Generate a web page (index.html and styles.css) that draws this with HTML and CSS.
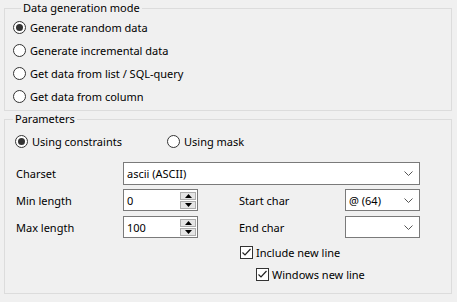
FILE: index.html
```html
<!DOCTYPE html>
<html lang="en">
<head>
    <meta charset="UTF-8">
    <title>Data generation</title>
    <link rel="stylesheet" href="styles.css">
</head>
<body>
    <fieldset class="group group-mode">
        <legend>Data generation mode</legend>
        <label class="radio-row"><span class="radio checked"></span>Generate random data</label>
        <label class="radio-row"><span class="radio"></span>Generate incremental data</label>
        <label class="radio-row"><span class="radio"></span>Get data from list / SQL-query</label>
        <label class="radio-row"><span class="radio"></span>Get data from column</label>
    </fieldset>

    <fieldset class="group group-params">
        <legend>Parameters</legend>
        <div class="mode-row">
            <label class="radio-inline first"><span class="radio checked"></span>Using constraints</label>
            <label class="radio-inline"><span class="radio"></span>Using mask</label>
        </div>

        <div class="form-grid">
            <span class="lbl">Charset</span>
            <div class="combo wide">
                <span class="combo-text">ascii (ASCII)</span>
                <svg class="chevron" width="9" height="5" viewBox="0 0 9 5"><polyline points="0.5,0.5 4.5,4.5 8.5,0.5" fill="none" stroke="#555" stroke-width="1"/></svg>
            </div>

            <span class="lbl">Min length</span>
            <div class="spin">
                <span class="spin-text">0</span>
                <div class="spin-btns">
                    <span class="spin-btn"><svg width="7" height="4" viewBox="0 0 7 4"><polygon points="3.5,0 7,4 0,4" fill="#000"/></svg></span>
                    <span class="spin-btn"><svg width="7" height="4" viewBox="0 0 7 4"><polygon points="0,0 7,0 3.5,4" fill="#000"/></svg></span>
                </div>
            </div>
            <span class="lbl lbl-right">Start char</span>
            <div class="combo">
                <span class="combo-text">@ (64)</span>
                <svg class="chevron" width="9" height="5" viewBox="0 0 9 5"><polyline points="0.5,0.5 4.5,4.5 8.5,0.5" fill="none" stroke="#555" stroke-width="1"/></svg>
            </div>

            <span class="lbl">Max length</span>
            <div class="spin">
                <span class="spin-text">100</span>
                <div class="spin-btns">
                    <span class="spin-btn"><svg width="7" height="4" viewBox="0 0 7 4"><polygon points="3.5,0 7,4 0,4" fill="#000"/></svg></span>
                    <span class="spin-btn"><svg width="7" height="4" viewBox="0 0 7 4"><polygon points="0,0 7,0 3.5,4" fill="#000"/></svg></span>
                </div>
            </div>
            <span class="lbl lbl-right">End char</span>
            <div class="combo">
                <span class="combo-text"></span>
                <svg class="chevron" width="9" height="5" viewBox="0 0 9 5"><polyline points="0.5,0.5 4.5,4.5 8.5,0.5" fill="none" stroke="#555" stroke-width="1"/></svg>
            </div>
        </div>

        <label class="check-row">
            <span class="check"><svg width="11" height="11" viewBox="0 0 11 11"><polyline points="1.5,5.5 4,8 9.5,2" fill="none" stroke="#222" stroke-width="1.2"/></svg></span>Include new line
        </label>
        <label class="check-row nested">
            <span class="check"><svg width="11" height="11" viewBox="0 0 11 11"><polyline points="1.5,5.5 4,8 9.5,2" fill="none" stroke="#222" stroke-width="1.2"/></svg></span>Windows new line
        </label>
    </fieldset>
</body>
</html>
```

FILE: styles.css
```css
* {
    box-sizing: border-box;
}

body {
    margin: 0;
    padding-top: 1px;
    width: 457px;
    height: 302px;
    background: #f0f0f0;
    font-family: "Noto Sans", "Open Sans", sans-serif;
    font-size: 11px;
    color: #000;
    overflow: hidden;
}

.group {
    margin: 0 5px 0 4px;
    padding: 0;
    border: 1px solid #dcdcdc;
    min-width: 0;
}

.group legend {
    margin-left: 8px;
    padding: 0 2px;
    line-height: 14px;
}

.group-mode {
    padding: 1px 0 2px 8px;
}

.radio-row {
    display: flex;
    align-items: center;
    height: 23px;
}

.radio {
    display: inline-block;
    width: 13px;
    height: 13px;
    border: 1px solid #333;
    border-radius: 50%;
    background: #fff;
    margin-right: 4px;
    position: relative;
    flex: none;
}

.radio.checked::after {
    content: "";
    position: absolute;
    left: 2px;
    top: 2px;
    width: 7px;
    height: 7px;
    border-radius: 50%;
    background: #333;
}

.group-params {
    margin-top: 1px;
    padding: 4px 0 8px 0;
}

.mode-row {
    display: flex;
    align-items: center;
    height: 22px;
    padding-left: 10px;
}

.radio-inline {
    display: flex;
    align-items: center;
}

.radio-inline.first {
    width: 152px;
}

.form-grid {
    display: grid;
    grid-template-columns: 107px 75px 41px 106px 75px;
    grid-auto-rows: 22px;
    row-gap: 5px;
    margin-top: 10px;
    padding-left: 11px;
    align-items: center;
}

.form-grid .wide {
    grid-column: 2 / 6;
    height: 23px;
}

.lbl-right {
    grid-column: 4;
}

.combo {
    display: flex;
    align-items: center;
    height: 22px;
    border: 1px solid #7a7a7a;
    background: #fff;
    padding: 0 6px 0 3px;
}

.combo-text {
    flex: 1;
}

.chevron {
    flex: none;
}

.spin {
    display: flex;
    align-items: center;
    height: 22px;
    border: 1px solid #7a7a7a;
    background: #fff;
    padding: 0 1px 0 3px;
}

.spin-text {
    flex: 1;
}

.spin-btns {
    display: flex;
    flex-direction: column;
    gap: 1px;
}

.spin-btn {
    display: flex;
    align-items: center;
    justify-content: center;
    width: 16px;
    height: 8px;
    background: #e5e5e5;
    border: 1px solid #adadad;
}

.check-row {
    display: flex;
    align-items: center;
    height: 22px;
    margin-top: 3px;
    padding-left: 235px;
}

.check-row.nested {
    margin-top: 0;
    padding-left: 251px;
}

.check {
    display: flex;
    align-items: center;
    justify-content: center;
    width: 13px;
    height: 13px;
    border: 1px solid #333;
    background: #fff;
    margin-right: 3px;
    flex: none;
}
```
